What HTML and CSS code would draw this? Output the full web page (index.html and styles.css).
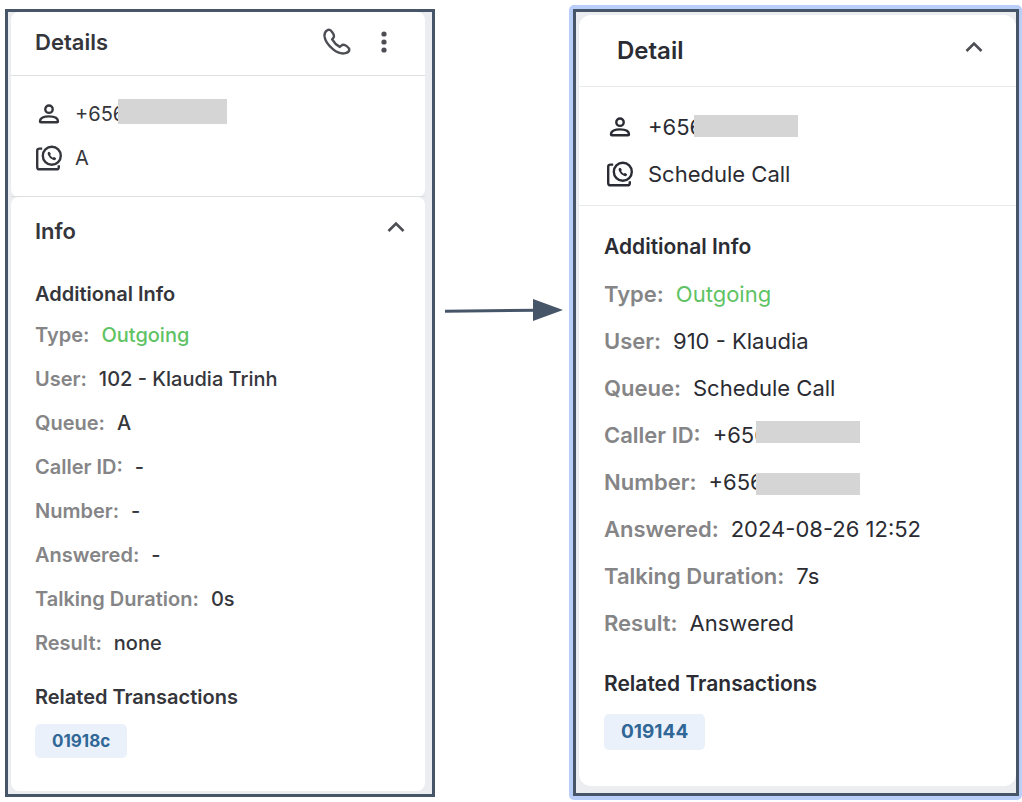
FILE: index.html
```
<!DOCTYPE html>
<html lang="en">
<head>
    <meta charset="utf-8">
    <title>Call Details</title>
    <link rel="stylesheet" href="styles.css">
</head>

<body>

    <!-- shared icons -->
    <svg class="sprite" aria-hidden="true">
        <symbol id="person" viewBox="0 0 28 28">
            <circle cx="14" cy="9.2" r="3.7"/>
            <path d="M5 21.4C5 17.8 9 16.4 14 16.4S23 17.8 23 21.4Q23 22.2 22 22.2H6Q5 22.2 5 21.4Z"/>
        </symbol>
        <symbol id="queue" viewBox="0 0 28 28">
            <path d="M7.2 4.6H4.5Q2.2 4.6 2.2 6.9V22.9Q2.2 25.3 4.6 25.3H21.4Q23.8 25.3 23.8 22.9V21.2"/>
            <circle cx="16.8" cy="11.8" r="9"/>
            <path class="solid" d="M13 8.2Q14 7.2 14.8 8.2L15.8 9.7Q15.7 10.5 15.1 11Q16 12.8 17.8 13.7Q18.4 13 19.1 13.1L20.8 14.1Q21.5 14.8 20.7 15.6Q19.6 16.8 17.5 15.6Q14.2 13.9 13 11Q12.2 9.2 13 8.2Z"/>
        </symbol>
        <symbol id="chevron" viewBox="0 0 20 12">
            <path d="M2.5 10L10 2.6L17.5 10"/>
        </symbol>
    </svg>

    <div class="compare">

        <div class="frame before">
            <div class="card">
                <div class="header">
                    <h1>Details</h1>
                    <button type="button" aria-label="Call">
                        <svg class="phone" viewBox="0 0 28 28"><path d="M4.3 2.2C2.5 3.2 1.3 5.4 1.5 8.2C2 12.8 5.4 17.6 10.2 21.4C14.4 24.8 18.8 26 22.4 25.2C24.8 24.7 26.2 23.4 26.3 21.9C26.4 20.4 25.3 19.3 23.7 18.1C21.6 16.5 19.7 16.3 18.3 17.6L16.8 18.9C13.8 17.2 10.9 14.4 9.2 11.3L10.3 9.9C11.6 8.6 10.9 6.5 9.3 4.3C8 2.3 6.3 0.9 4.3 2.2Z"/></svg>
                    </button>
                    <button type="button" aria-label="More">
                        <svg class="dots" viewBox="0 0 6 22"><circle cx="3" cy="3" r="2.6"/><circle cx="3" cy="11" r="2.6"/><circle cx="3" cy="19" r="2.6"/></svg>
                    </button>
                </div>
                <ul class="contact">
                    <li><svg class="icon"><use href="#person"/></svg><span>+656</span><i class="mask"></i></li>
                    <li><svg class="icon"><use href="#queue"/></svg><span>A</span></li>
                </ul>
            </div>
            <div class="card">
                <div class="header">
                    <h2>Info</h2>
                    <button type="button" aria-label="Collapse"><svg class="chevron"><use href="#chevron"/></svg></button>
                </div>
                <div class="info">
                    <h3>Additional Info</h3>
                    <dl>
                        <div><dt>Type:</dt><dd class="outgoing">Outgoing</dd></div>
                        <div><dt>User:</dt><dd>102 - Klaudia Trinh</dd></div>
                        <div><dt>Queue:</dt><dd>A</dd></div>
                        <div><dt>Caller ID:</dt><dd>-</dd></div>
                        <div><dt>Number:</dt><dd>-</dd></div>
                        <div><dt>Answered:</dt><dd>-</dd></div>
                        <div><dt>Talking Duration:</dt><dd>0s</dd></div>
                        <div><dt>Result:</dt><dd>none</dd></div>
                    </dl>
                    <h3>Related Transactions</h3>
                    <a class="tag" href="#">01918c</a>
                </div>
            </div>
        </div>

        <svg class="arrow" viewBox="0 0 118 24">
            <path d="M0 13.2L92 12.2" stroke="#475569" stroke-width="3"/>
            <path d="M88 1L118 12L88 23Z" fill="#475569"/>
        </svg>

        <div class="selected">
            <div class="frame after">
                <div class="card">
                    <div class="header">
                        <h1>Detail</h1>
                        <button type="button" aria-label="Collapse"><svg class="chevron"><use href="#chevron"/></svg></button>
                    </div>
                    <ul class="contact">
                        <li><svg class="icon"><use href="#person"/></svg><span>+656</span><i class="mask"></i></li>
                        <li><svg class="icon"><use href="#queue"/></svg><span>Schedule Call</span></li>
                    </ul>
                    <div class="info">
                        <h3>Additional Info</h3>
                        <dl>
                            <div><dt>Type:</dt><dd class="outgoing">Outgoing</dd></div>
                            <div><dt>User:</dt><dd>910 - Klaudia</dd></div>
                            <div><dt>Queue:</dt><dd>Schedule Call</dd></div>
                            <div><dt>Caller ID:</dt><dd>+656</dd><i class="mask"></i></div>
                            <div><dt>Number:</dt><dd>+656</dd><i class="mask low"></i></div>
                            <div><dt>Answered:</dt><dd>2024-08-26 12:52</dd></div>
                            <div><dt>Talking Duration:</dt><dd>7s</dd></div>
                            <div><dt>Result:</dt><dd>Answered</dd></div>
                        </dl>
                        <h3>Related Transactions</h3>
                        <a class="tag" href="#">019144</a>
                    </div>
                </div>
            </div>
        </div>

    </div>

</body>

</html>
```
FILE: styles.css
```
* {
    box-sizing: border-box;
}

body {
    margin: 0;
    background-color: white;
    color: #35363c;
    font-family: Inter, "Liberation Sans", sans-serif;
    font-size: 20px;
}

h1, h2, h3, ul, dl, dd {
    margin: 0;
    padding: 0;
}

h1, h2, h3 {
    font-weight: 600;
}

button {
    display: flex;
    padding: 0;
    border: 0;
    background: none;
}

svg {
    fill: none;
    stroke: #4d4e54;
    stroke-width: 2;
}

.sprite {
    position: absolute;
    width: 0;
    height: 0;
}

.compare {
    display: grid;
    grid-template-columns: 430fr 134fr 453fr;
    align-items: start;
    padding: 5px 0 0 5px;
}

.frame {
    border: 3px solid #475569;
    background-color: #ecedf1;
}

.selected {
    padding: 4px 3px 4px 4px;
    border-radius: 5px;
    background-color: #b9cef8;
}

.card {
    background-color: white;
}

.header {
    display: flex;
    align-items: center;
}

.header h1, .header h2 {
    flex: 1;
}

.contact {
    list-style: none;
    border-bottom: 1px solid #dedfe2;
}

.contact li, .info dl div {
    display: flex;
    align-items: center;
    position: relative;
}

.icon {
    width: 28px;
    height: 28px;
    stroke: currentColor;
    stroke-width: 2.4;
}

.solid {
    fill: currentColor;
    stroke: none;
}

.phone {
    width: 28px;
    height: 28px;
    stroke-width: 2.4;
}

.dots {
    width: 6px;
    height: 22px;
    fill: #4d4e54;
    stroke: none;
}

.chevron {
    width: 20px;
    height: 12px;
    margin-bottom: 8px;
    stroke-width: 2.6;
}

.mask {
    position: absolute;
    background-color: #d5d5d5;
}

dt {
    color: #858587;
    font-weight: 600;
}

.info .outgoing {
    color: #5fc365;
}

.tag {
    display: inline-block;
    border-radius: 5px;
    background-color: #eaf1fa;
    color: #316797;
    font-weight: 700;
    text-decoration: none;
}

.arrow {
    justify-self: center;
    width: 118px;
    height: 24px;
    margin: 293px 0 0 3px;
    stroke: none;
}

/* left panel */
.before {
    margin-top: 4px;
    padding: 0 7px 3px 3px;
}

.before .card {
    border-radius: 8px;
}

.before .header {
    height: 64px;
    padding: 0 38px 3px 24px;
    gap: 30px;
    border-bottom: 1px solid #dedfe2;
}

.before h1, .before h2 {
    font-size: 22px;
}

.before .contact {
    padding: 16px 24px;
}

.before .contact li {
    height: 44px;
    gap: 12px;
}

.before .mask {
    top: 7px;
    left: 83px;
    width: 109px;
    height: 25px;
}

.before .card + .card .header {
    height: 66px;
    padding: 2px 19px 0 24px;
    border: 0;
}

.before .info {
    padding: 14px 24px 33px;
}

.before h3 {
    font-size: 20px;
    line-height: 34px;
}

.before dl {
    padding: 2px 0 15px;
}

.before dl div {
    height: 44px;
    gap: 12px;
}

.before dd {
    font-weight: 500;
}

.before .tag {
    margin-top: 10px;
    padding: 0 17px;
    font-size: 17px;
    line-height: 34px;
}

/* right panel */
.after {
    padding: 3px 0 7px 3px;
    color: #2b2c33;
    font-size: 22px;
}

.after .card {
    border-radius: 12px;
}

.after .header {
    height: 72px;
    padding: 0 32px 0 38px;
    border-bottom: 1px solid #e8e9eb;
}

.after h1 {
    font-size: 24px;
}

.after .contact {
    padding: 16px 25px 8px 27px;
    border-color: #e8e9eb;
}

.after .contact li {
    height: 47px;
    gap: 14px;
}

.after .mask {
    top: 12px;
    left: 88px;
    width: 104px;
    height: 22px;
}

.after .info {
    padding: 22px 25px 36px;
}

.after h3 {
    font-size: 21px;
    line-height: 38px;
}

.after dl {
    padding: 4px 0 19px;
}

.after dl div {
    height: 47px;
    gap: 12px;
}

.after dl .mask {
    top: 10px;
    left: 152px;
}

.after dl .mask.low {
    top: 15px;
}

.after .tag {
    margin-top: 11px;
    padding: 0 17px;
    font-size: 19px;
    line-height: 36px;
}
```
